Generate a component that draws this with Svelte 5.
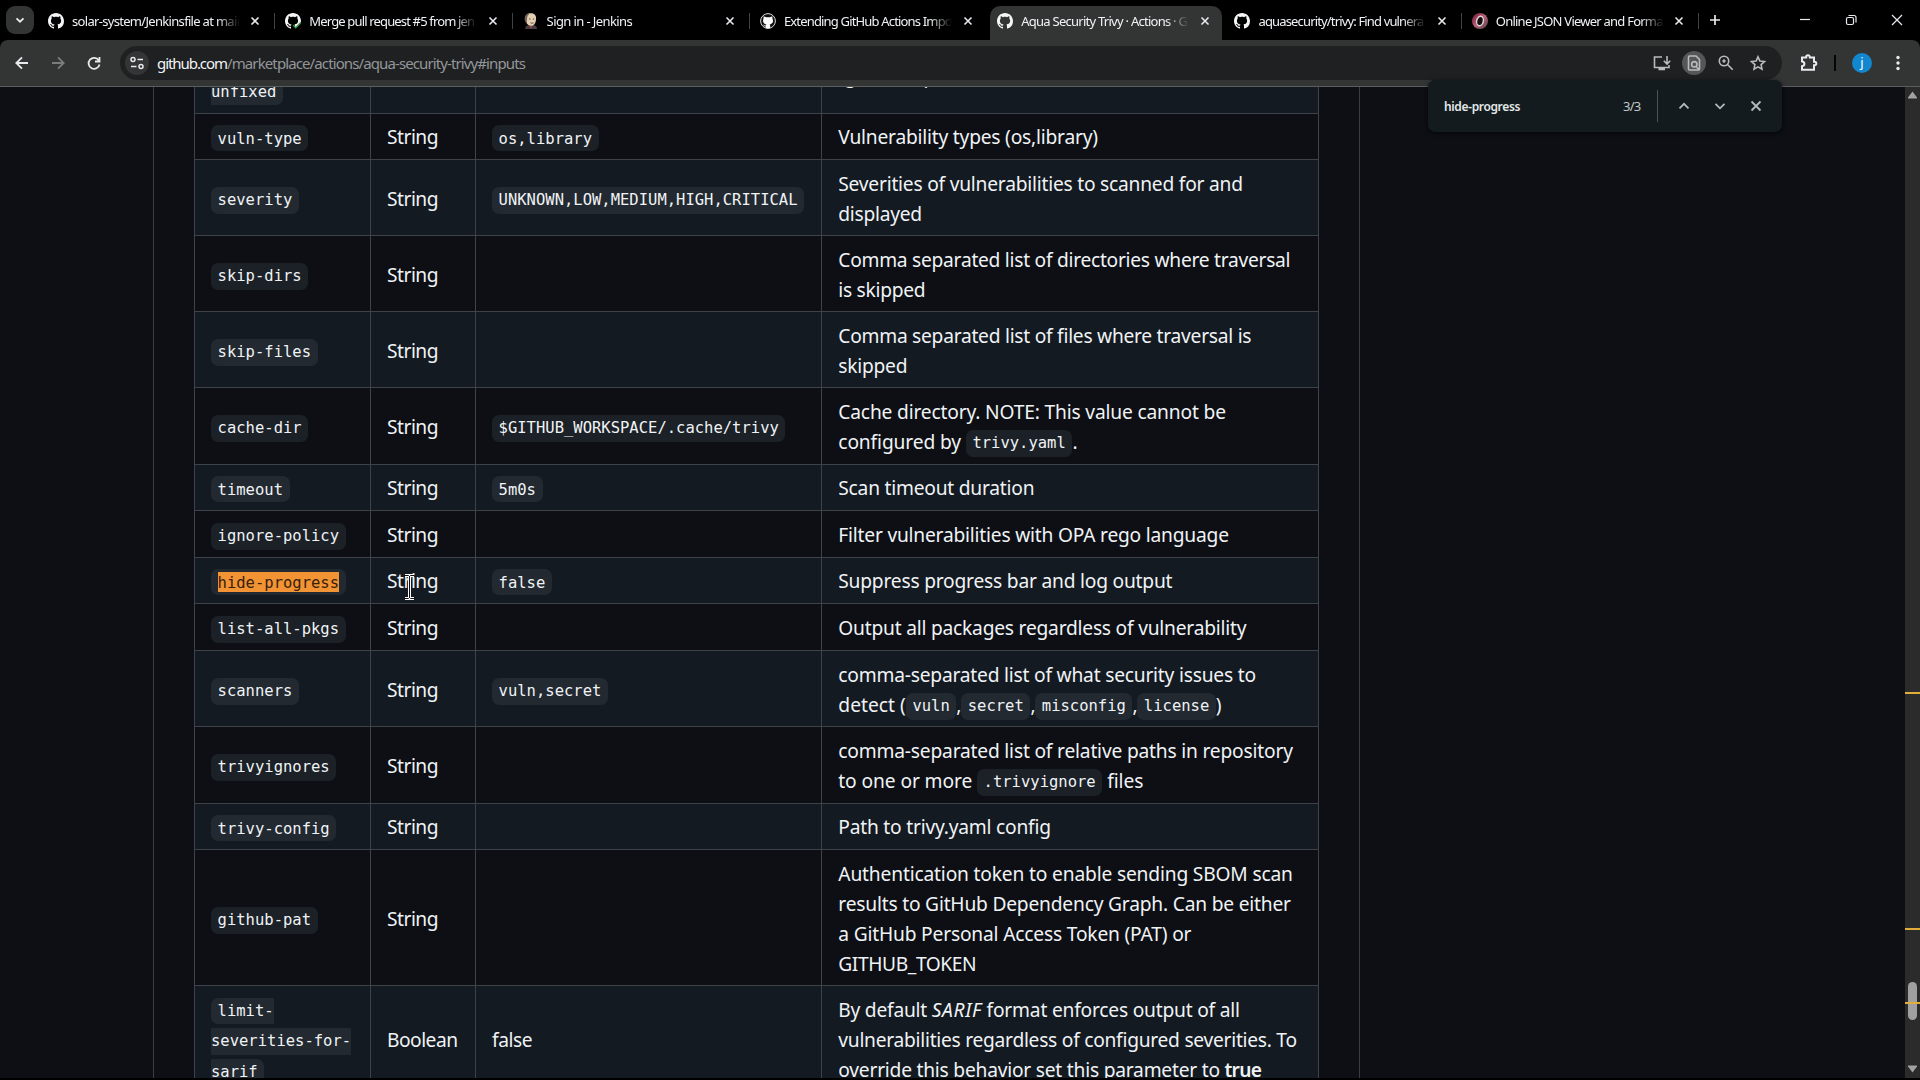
<script>
  const tabs = [
    { icon: 'github', title: 'solar-system/Jenkinsfile at main', w: 172 },
    { icon: 'check', title: 'Merge pull request #5 from jen', w: 165 },
    { icon: 'jenkins', title: 'Sign in - Jenkins', w: 85.5 },
    { icon: 'circlecat', title: 'Extending GitHub Actions Impo', w: 168 },
    { icon: 'github', title: 'Aqua Security Trivy · Actions · G', w: 166, active: true },
    { icon: 'github', title: 'aquasecurity/trivy: Find vulnera', w: 165 },
    { icon: 'json', title: 'Online JSON Viewer and Forma', w: 167 },
  ];

  const t = (text, w) => ({ text, w });
  const c = (code) => ({ code });

  // h is the full row pitch, including its one pixel bottom rule
  const rows = [
    { h: 77, name: ['ignore-', 'unfixed'], type: '', desc: [[t('Ignore unpatched/unfixed vulnerabilities', 352)]] },
    { h: 46, name: ['vuln-type'], value: 'os,library', desc: [[t('Vulnerability types (os,library)', 259.5)]] },
    { h: 76, name: ['severity'], value: 'UNKNOWN,LOW,MEDIUM,HIGH,CRITICAL', desc: [[t('Severities of vulnerabilities to scanned for and', 404.5)], [t('displayed', 83.5)]] },
    { h: 76, name: ['skip-dirs'], desc: [[t('Comma separated list of directories where traversal', 452)], [t('is skipped', 87)]] },
    { h: 76, name: ['skip-files'], desc: [[t('Comma separated list of files where traversal is', 413)], [t('skipped', 69)]] },
    { h: 77, name: ['cache-dir'], value: '$GITHUB_WORKSPACE/.cache/trivy', desc: [[t('Cache directory. NOTE: This value cannot be', 387.5)], [t('configured by ', 127.5), c('trivy.yaml'), t('.', 6)]] },
    { h: 46, name: ['timeout'], value: '5m0s', desc: [[t('Scan timeout duration', 196)]] },
    { h: 47, name: ['ignore-policy'], desc: [[t('Filter vulnerabilities with OPA rego language', 390.5)]] },
    { h: 46, name: ['hide-progress'], hit: true, value: 'false', desc: [[t('Suppress progress bar and log output', 334)]] },
    { h: 47, name: ['list-all-pkgs'], desc: [[t('Output all packages regardless of vulnerability', 408)]] },
    { h: 76, name: ['scanners'], value: 'vuln,secret', desc: [[t('comma-separated list of what security issues to', 417.5)], [t('detect (', 67.5), c('vuln'), t(',', 4.8), c('secret'), t(',', 4.8), c('misconfig'), t(',', 4.8), c('license'), t(')', 6)]] },
    { h: 77, name: ['trivyignores'], desc: [[t('comma-separated list of relative paths in repository', 454.5)], [t('to one or more ', 138.7), c('.trivyignore'), t(' files', 41)]] },
    { h: 46, name: ['trivy-config'], desc: [[t('Path to trivy.yaml config', 212.5)]] },
    { h: 136, name: ['github-pat'], desc: [[t('Authentication token to enable sending SBOM scan', 454.5)], [t('results to GitHub Dependency Graph. Can be either', 452.5)], [t('a GitHub Personal Access Token (PAT) or', 353)], [t('GITHUB_TOKEN', 138)]] },
    { h: 107, name: ['limit-', 'severities-for-', 'sarif'], type: 'Boolean', plain: 'false', desc: [[t('By default ', 93.5), { text: 'SARIF', w: 50, em: true }, t(' format enforces output of all', 258)], [t('vulnerabilities regardless of configured severities. To', 458.5)], [t('override this behavior set this parameter to ', 386.3), { text: 'true', w: 36.5, bold: true }]] },
  ];

  const marks = [692, 928, 1002];

  // Spreads the letters of a node so that its text takes the given width
  function fit(node, width) {
    const natural = node.getBoundingClientRect().width;
    node.style.letterSpacing = (width - natural) / node.textContent.length + 'px';
  }
</script>

{#snippet cat()}
  <path fill="#f4f6f8" d="M8 0C3.58 0 0 3.58 0 8c0 3.54 2.29 6.53 5.47 7.59.4.07.55-.17.55-.38 0-.19-.01-.82-.01-1.49-2.01.37-2.53-.49-2.69-.94-.09-.23-.48-.94-.82-1.13-.28-.15-.68-.52-.01-.53.63-.01 1.08.58 1.23.82.72 1.21 1.87.87 2.33.66.07-.52.28-.87.51-1.07-1.78-.2-3.64-.89-3.64-3.95 0-.87.31-1.59.82-2.15-.08-.2-.36-1.02.08-2.12 0 0 .67-.21 2.2.82.64-.18 1.32-.27 2-.27s1.36.09 2 .27c1.53-1.04 2.2-.82 2.2-.82.44 1.1.16 1.92.08 2.12.51.56.82 1.27.82 2.15 0 3.07-1.87 3.75-3.65 3.95.29.25.54.73.54 1.48 0 1.07-.01 1.93-.01 2.2 0 .21.15.46.55.38A8.01 8.01 0 0 0 16 8c0-4.42-3.58-8-8-8z" />
{/snippet}

{#snippet favicon(kind)}
  <svg class="fav" viewBox="0 0 16 16">
    {#if kind === 'github'}
      {@render cat()}
    {:else if kind === 'check'}
      {@render cat()}
      <path d="M7.500 12l3 3 6-6.500V16H7z" fill="#000" />
      <path d="M8.200 12.300l2.500 2.500 4.900-5" fill="none" stroke="#3f9a4c" stroke-width="1.400" />
    {:else if kind === 'circlecat'}
      <circle cx="8" cy="8" r="7.400" fill="#111" stroke="#dcdcdc" stroke-width="1" />
      <path fill="#fff" d="M3.700 3.300l2.300 1h4l2.300-1 .3 2.800c1.200 3-.4 5-2.900 5.400l.5 1.300v2.400H5.800v-1.700c-1.600.2-2-1-2.900-1.700 1.300-.2 1.600 1 2.900.7l.6-1C3.700 11 2.400 9 3.400 6.100z" />
    {:else if kind === 'jenkins'}
      <path d="M2 16c.3-2.500 2-4 4-4.300l5 .3c2 .7 3 2 3.200 4z" fill="#4a3c40" />
      <path d="M2.300 6C2 2 4.500.2 8 .3c3.600 0 5.600 2.600 5 6.200-.3 3.500-1.800 6.300-4.700 6.300C5 12.800 3 10 2.300 6z" fill="#e3cfb2" />
      <path d="M1.800 7.500C1 3 3.500.2 7 .2 4.500 2 4 4 4 7l-.5 3.500z" fill="#756457" />
      <path d="M6 6h1.500M9.800 6h1.500M7.500 9.800c1 .6 2 .5 3 0" stroke="#50382e" stroke-width=".9" fill="none" />
      <path d="M7 12.500l2.500 1.300-2 1.700z" fill="#a84a43" />
    {:else}
      <defs><linearGradient id="ring" x1="0" y1="0" x2="1" y2="1"><stop offset="0" stop-color="#6d0f2b" /><stop offset=".5" stop-color="#b8637b" /><stop offset="1" stop-color="#4a4346" /></linearGradient></defs>
      <circle cx="8" cy="8" r="8" fill="url(#ring)" />
      <ellipse cx="8" cy="8" rx="3.300" ry="4.800" fill="#150c0f" stroke="#e6d5da" stroke-width="1.400" transform="rotate(12 8 8)" />
    {/if}
  </svg>
{/snippet}

{#snippet code(text)}
  <code class="chip">{text}</code>
{/snippet}

<div class="window">
  <header class="strip">
    <button class="search-tabs" aria-label="Search tabs"><svg viewBox="0 0 28 28"><path d="M10.500 12.300l3.500 3.400 3.500-3.400" /></svg></button>
    <nav class="tabs">
      {#each tabs as tab, i}
        <div class="tab" class:active={tab.active} class:bare={tab.active || tabs[i + 1]?.active}>
          {@render favicon(tab.icon)}
          <div class="title"><span use:fit={tab.w}>{tab.title}</span></div>
          <svg class="x" viewBox="0 0 16 16"><path d="M4.500 4.500l7 7M11.500 4.500l-7 7" /></svg>
        </div>
      {/each}
    </nav>
    <svg class="plus" viewBox="0 0 20 20"><path d="M10 5v10M5 10h10" /></svg>
    <div class="controls">
      <svg viewBox="0 0 46 40"><path d="M18 19.500h10" /></svg>
      <svg viewBox="0 0 46 40"><rect x="18.500" y="17.500" width="7" height="7" rx="1.500" /><path d="M20.500 15.500h5.500a2 2 0 0 1 2 2v5" /></svg>
      <svg viewBox="0 0 46 40"><path d="M18 15l10 10M28 15l-10 10" /></svg>
    </div>
  </header>

  <div class="bar">
    <div class="nav">
      <svg viewBox="0 0 36 36"><path d="M24 18H12.500M18 12.300L12.300 18l5.700 5.700" /></svg>
      <svg class="dim" viewBox="0 0 36 36"><path d="M12 18h11.500M18 12.300l5.700 5.700-5.700 5.700" /></svg>
      <svg viewBox="0 0 36 36"><path d="M22.700 15.300A5.500 5.500 0 1 0 23.500 19.500M23.500 12v4.500H19" /></svg>
    </div>
    <div class="omni">
      <div class="tune"><svg viewBox="0 0 24 24"><circle cx="8" cy="8.500" r="2" /><path d="M12.500 8.500H18M6 15.500h5.500" /><circle cx="16" cy="15.500" r="2" /></svg></div>
      <div class="url"><span use:fit={70}>github.com</span><span class="path" use:fit={298}>/marketplace/actions/aqua-security-trivy#inputs</span></div>
      <div class="tools">
        <svg viewBox="0 0 24 24"><path d="M12 6H4.500v10.500h14.500V14M17 5v8M13.800 9.800L17 13l3.200-3.200" /><path class="foot" d="M8.500 18h6.500" /></svg>
        <svg class="on" viewBox="0 0 24 24"><path d="M14 5H7.500a1 1 0 0 0-1 1v12a1 1 0 0 0 1 1h9a1 1 0 0 0 1-1V8.500zM14.500 16l3 3" /><circle cx="12.300" cy="13.300" r="2.700" /></svg>
        <svg viewBox="0 0 24 24"><circle cx="10" cy="10" r="4.700" /><path d="M13.500 13.500l5.200 5.200M10 8.300v3.400M8.300 10h3.400" /></svg>
        <svg viewBox="0 0 24 24"><path d="M12 5.800l1.900 4.200 4.600.5-3.400 3.100.9 4.500-4-2.300-4 2.300.9-4.500-3.400-3.100 4.600-.5z" /></svg>
      </div>
    </div>
    <svg class="puzzle" viewBox="0 0 24 24"><path d="M5 6.500h4.200V6a1.800 1.800 0 0 1 3.600 0v.5H17v4.200h.5a1.800 1.800 0 0 1 0 3.600H17v4.500H5v-3.600c3.200-.2 3.200-4.600 0-4.800z" /></svg>
    <i class="vr"></i>
    <div class="avatar">j</div>
    <svg class="dots" viewBox="0 0 24 24"><circle cx="12" cy="6.500" r="1.700" /><circle cx="12" cy="12" r="1.700" /><circle cx="12" cy="17.500" r="1.700" /></svg>
  </div>

  <main class="view">
    <div class="page">
      <section class="frame">
        <div class="table">
          {#each rows as row, i}
            <div class="row" class:alt={i % 2 === 0} class:short={row.h === 46} class:odd={row.h === 47 || row.h === 77} style:height="{row.h}px">
              <div class="cell">
                {#if row.name.length > 1}
                  <div class="wrapped">{#each row.name as part}<code>{part}</code>{/each}</div>
                {:else if row.hit}
                  <code class="chip"><mark>{row.name[0]}</mark></code>
                {:else}
                  {@render code(row.name[0])}
                {/if}
              </div>
              <div class="cell">
                {#if row.type === 'Boolean'}<span class="ln" use:fit={70.5}>Boolean</span>
                {:else if row.type !== ''}<span class="ln" use:fit={51}>String</span>{/if}
              </div>
              <div class="cell">
                {#if row.value}{@render code(row.value)}{/if}
                {#if row.plain}<span class="ln" use:fit={40}>{row.plain}</span>{/if}
              </div>
              <div class="cell desc">
                {#each row.desc as line}
                  <div class="line">{#each line as part}{#if part.code}{@render code(part.code)}{:else}<span class="ln" class:em={part.em} class:bold={part.bold} use:fit={part.w}>{part.text}</span>{/if}{/each}</div>
                {/each}
              </div>
            </div>
          {/each}
        </div>
      </section>
    </div>
    <aside class="scroll">
      <svg viewBox="0 0 15 12"><path d="M7.500 4.500L12 10.500q.3 1-.5 1h-8q-.8 0-.5-1z" /></svg>
      <svg viewBox="0 0 15 12"><path d="M7.500 8.500L12 2.500q.3-1-.5-1h-8q-.8 0-.5 1z" /></svg>
    </aside>
  </main>
  <div class="thumb"></div>
  {#each marks as y}<i class="hit-mark" style:top="{y}px"></i>{/each}

  <div class="find">
    <b><span use:fit={76}>hide-progress</span></b>
    <span class="count"><span use:fit={17.5}>3/3</span></span>
    <i></i>
    <svg viewBox="0 0 36 36"><path d="M13.500 20.300L18 15.800l4.500 4.500" /></svg>
    <svg viewBox="0 0 36 36"><path d="M13.500 15.800l4.500 4.500 4.500-4.500" /></svg>
    <svg viewBox="0 0 36 36"><path d="M13.500 13.500l9 9M22.500 13.500l-9 9" /></svg>
  </div>

  <svg class="cursor" viewBox="0 0 13 28"><path class="edge" d="M2 2.500h3.500l1 1 1-1H11M6.500 3v22M2 25.500h3.500l1-1 1 1H11" /><path class="core" d="M2 2.500h3.500l1 1 1-1H11M6.500 3v22M2 25.500h3.500l1-1 1 1H11" /></svg>
</div>

<style>
  :global(body) { background: #000; overflow: hidden; }
  .window { position: relative; width: 1920px; height: 1080px; display: flex; flex-direction: column; background: #000; font-family: "Noto Sans", sans-serif; color: #f0f3f6; overflow: hidden; }
  svg { display: block; flex: none; fill: none; stroke: #e8eaed; }

  .strip { height: 40px; flex: none; display: flex; align-items: center; }
  .search-tabs { width: 28px; height: 28px; margin: 0 4px 0 6px; padding: 0; border: 0; border-radius: 9px; background: #333434; }
  .search-tabs svg { width: 28px; height: 28px; stroke-width: 1.8; }
  .tabs { display: flex; height: 40px; }
  .tab { position: relative; width: 237.3px; box-sizing: border-box; padding: 1px 0 0 10px; display: flex; align-items: center; font-size: 13px; line-height: 20px; }
  .tab:not(.bare)::after { content: ""; width: 1px; height: 16px; margin-left: 11px; background: #414244; }
  .fav { position: relative; width: 16px; height: 16px; stroke: none; }
  .title { position: relative; width: 168px; margin-left: 8px; overflow: hidden; white-space: pre; mask-image: linear-gradient(90deg, #000 145px, transparent 168px); }
  .title span, .url span, .find span span { display: inline-block; }
  .x { position: relative; width: 16px; height: 16px; margin-left: 8px; stroke-width: 1.6; }
  .active::before { content: ""; position: absolute; left: 3px; right: 2px; top: 6px; bottom: 0; background: #333434; border-radius: 10px 10px 0 0; }
  .plus { width: 20px; height: 20px; margin-left: 6px; stroke-width: 1.7; }
  .controls { display: flex; margin-left: auto; }
  .controls svg { width: 46px; height: 40px; stroke-width: 1.2; }

  .bar { height: 46px; flex: none; box-sizing: border-box; display: flex; align-items: center; background: #333434; border-radius: 8px 8px 0 0; padding-left: 4px; }
  .nav { display: flex; width: 116px; }
  .nav svg { width: 36px; height: 36px; stroke-width: 1.8; }
  .nav .dim { stroke: #7b7c7d; }
  .omni { width: 1662px; height: 34px; box-sizing: border-box; border-radius: 17px; background: #1f2021; display: flex; align-items: center; padding-left: 5px; }
  .tune { width: 24px; height: 24px; border-radius: 50%; background: #343535; }
  .tune svg { width: 24px; height: 24px; stroke-width: 1.5; }
  .url { margin-left: 8px; font-size: 15px; line-height: 24px; white-space: pre; }
  .path { color: #93979a; }
  .tools { display: flex; gap: 8px; margin: 0 12px 0 auto; }
  .tools svg { width: 24px; height: 24px; stroke: #b9bbbd; stroke-width: 1.6; border-radius: 50%; }
  .tools .foot { stroke-width: 2.6; }
  .tools .on { background: #555657; }
  .puzzle { width: 24px; height: 24px; margin-left: 15px; stroke-width: 2; }
  .vr { width: 2px; height: 16px; margin-left: 13px; background: #050505; }
  .avatar { width: 20px; height: 20px; margin-left: 16px; border-radius: 50%; background: #1287cf; font-size: 13px; line-height: 18px; text-align: center; color: #fff; }
  .dots { width: 24px; height: 24px; margin-left: 14px; fill: #e8eaed; stroke: none; }

  .view { height: 992px; flex: none; box-sizing: border-box; display: flex; border-top: 1px solid #5c5d5e; background: #0d0f14; overflow: hidden; }
  .page { width: 1905px; padding-left: 153px; box-sizing: border-box; }
  .frame { width: 1207px; height: 991px; box-sizing: border-box; border: solid #3a3e44; border-width: 0 1px; padding-left: 40px; overflow: hidden; }
  .table { width: 1125px; box-sizing: border-box; margin-top: -50px; border-right: 1px solid #3e4349; font-size: 19.2px; line-height: 30px; }
  .row { display: grid; grid-template-columns: 176px 105px 346px 497px; box-sizing: border-box; border-bottom: 1px solid #3e4349; }
  .alt { background: #141a21; }
  .cell { border-left: 1px solid #3e4349; padding: 2px 0 0 16px; display: flex; align-items: center; min-width: 0; }
  .short .cell { padding-top: 0; }
  .cell.desc { flex-direction: column; align-items: flex-start; justify-content: center; padding-left: 16.3px; }
  .line { display: flex; align-items: center; height: 30px; }
  .ln { display: inline-block; white-space: pre; }
  .em { font-style: italic; }
  .bold { font-weight: 600; }
  code { font-family: "DejaVu Sans Mono", monospace; font-size: 15.52px; white-space: pre; }
  .chip { box-sizing: border-box; height: 27px; margin-top: 3px; padding: 0 6.6px; border-radius: 7px; background: #1b2126; line-height: 27px; }
  .short .chip { height: 26px; line-height: 28px; }
  .odd .chip { margin-top: 2px; line-height: 26px; }
  .line .chip { margin-top: 3px; }
  .odd .line .chip { margin-top: 2px; }
  .alt .chip, .wrapped code { background: #222930; }
  mark { display: inline-block; height: 20px; line-height: 22px; background: #f29433; color: #38200c; vertical-align: top; margin-top: 3px; }
  .wrapped { display: flex; flex-direction: column; align-items: flex-start; gap: 4px; margin-top: 3px; }
  .odd .wrapped { margin-top: 1px; }
  .wrapped code { height: 26.5px; line-height: 26px; }
  .wrapped code:first-child { padding-left: 6.6px; border-radius: 7px 0 0 7px; }
  .wrapped code:last-child { padding-right: 6.6px; border-radius: 0 7px 7px 0; }

  .scroll { width: 15px; display: flex; flex-direction: column; justify-content: space-between; background: #2b2b2b; }
  .scroll svg { width: 15px; height: 12px; fill: #a2a2a2; stroke: none; }
  .scroll svg:last-child { margin-bottom: 2px; }
  .thumb { position: absolute; left: 1908px; top: 982px; width: 9px; height: 38px; border-radius: 5px; background: #a0a0a0; }
  .hit-mark { position: absolute; left: 1905px; width: 15px; height: 2px; background: #e0ad38; }

  .find { position: absolute; left: 1428px; top: 80px; width: 354px; height: 52px; box-sizing: border-box; padding-left: 16px; display: flex; align-items: center; border-radius: 7px; background: #131b1e; font-size: 12px; box-shadow: 0 1px 4px #000a; white-space: pre; }
  .find b { font-weight: 600; width: 179px; color: #e3e8ea; }
  .count { width: 34px; color: #c3c7c9; font-size: 13px; }
  .find i { width: 1px; height: 32px; margin-right: 8px; background: #4b5356; }
  .find svg { width: 36px; height: 36px; stroke: #b4b9bb; stroke-width: 1.8; }

  .cursor { position: absolute; left: 403px; top: 573px; width: 13px; height: 28px; }
  .edge { stroke: #fff; stroke-width: 3; }
  .core { stroke: #111; stroke-width: 1; }
</style>
